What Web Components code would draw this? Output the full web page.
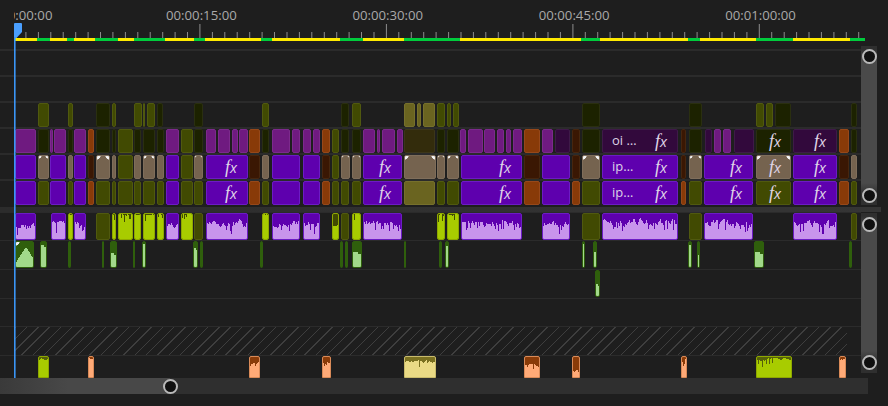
<!DOCTYPE html>
<html>
<head>
<meta charset="utf-8">
<title>Timeline</title>
<style>
  html, body { margin: 0; background: #1e1e1e; }
</style>
</head>
<body>
<nle-timeline>
  <nle-ruler slot="ruler"></nle-ruler>
  <nle-track slot="video" h="26" line="2"></nle-track>
  <nle-track slot="video" h="26" line="2"></nle-track>
  <nle-track slot="video" h="26" line="2" clips="38-49 o;68-73 o;96-110 d;112-116 o;134-142 o;143-145 o;147-155 o;157-163 d;194-203 d;262-269 o;341-349 d;352-361 o;404-415 g;417-421 g;423-435 g;437-445 o;447-451 o;453-459 o;582-600 d;689-702 d;756-764 o;766-773 o;775-791 d;851-857 d"></nle-track>
  <nle-track slot="video" h="26" line="2" clips="15-36 p;38-49 d;50-53 p;54-66 p;68-73 d;74-86 p;88-94 r;96-110 d;112-116 d;118-133 o;134-141 d;143-155 d;157-164 d;166-179 p;181-193 o;194-203 d;206-216 p;218-230 p;232-238 p;239-248 p;249-260 r;262-269 d;272-290 p;292-300 p;303-311 p;313-320 p;322-330 r;332-339 o;341-349 d;352-361 d;363-375 p;377-380 p;382-395 p;397-403 p;404-435 b;437-445 d;447-459 d;460-466 p;468-483 p;484-495 p;497-504 p;506-511 p;513-522 p;524-540 r;542-553 p;555-570 q;572-580 s;582-600 d;602-678 q fx oi_…;681-686 s;689-702 d;705-712 q;714-721 p;723-731 p;734-754 q;756-791 d fx;793-837 q fx;839-849 r;851-857 d"></nle-track>
  <nle-track slot="video" h="26" line="2" clips="15-36 v;38-49 t;50-66 v;68-73 t;74-86 v;88-94 s;96-110 t;112-116 t;118-133 o;134-141 t;143-155 t;157-164 t;166-179 v;181-193 o;194-203 t;206-248 v fx;249-260 s;262-269 t;272-300 v;303-320 v;322-330 s;332-339 o;341-350 t;352-361 t;363-402 v fx;404-436 t;437-445 t;447-459 t;461-522 v fx;524-540 s;542-570 v;572-580 s;582-600 t;602-678 v fx ip…;681-686 s;689-702 t;704-753 v fx;756-791 t fx;793-837 v fx;839-849 s;851-857 t"></nle-track>
  <nle-track slot="video" h="26" line="2" clips="15-36 v;38-49 o;50-66 v;68-73 o;74-86 v;88-94 r;96-110 o;112-116 o;118-133 o;134-141 o;143-155 o;157-164 o;166-179 v;181-193 o;194-203 o;206-248 v fx;249-260 r;262-269 o;272-300 v;303-320 v;322-330 r;332-339 o;341-349 o;352-361 o;363-402 v fx;404-435 g;437-445 o;447-459 o;461-522 v fx;524-540 r;542-570 v;572-580 r;582-600 o;602-678 v fx ip…;681-686 r;689-702 o;704-753 v fx;756-791 o fx;793-837 v fx;839-849 r;851-857 o"></nle-track>

  <nle-track slot="audio" h="28" line="1" ch="27" clips="15-36 w:.52;51-66 w:.6;68-73 l;74-86 w:.58;96-110 o;112-116 l;118-133 l;134-141 l;143-155 l;157-164 l;166-179 w:.55;181-193 l;194-203 o;206-248 w:.62;262-269 l;272-300 w:.6;303-320 w:.6;332-339 l:.55;341-349 o;352-361 l:1;363-402 w:.62;437-445 l;447-459 l;461-522 w:.62;542-570 w:.6;582-600 o;602-678 w:.66;689-702 o;704-753 w:.62;793-837 w:.6;851-857 o"></nle-track>
  <nle-track slot="audio" h="29" line="1" ch="27" clips="15-34 m;40-47 e:.85;68-71 n;102-104 n;110-117 e:.55;133-134 n;142-146 e:.9;193-198 e:.75;200-203 n;260-263 n;340-343 n;345-348 n;352-362 e:.6;404-405 n;439-442 n;445-449 e:.8;582-585 e:.9;593-597 e:.6;688-692 e:.85;697-700 e:.5;754-764 e:.6;849-852 n"></nle-track>
  <nle-track slot="audio" h="29" line="1" ch="27" clips="595-600 e:.5"></nle-track>
  <nle-track slot="audio" h="28" line="1" ch="27"></nle-track>
  <nle-track slot="audio" h="29" line="1" ch="28" hatch></nle-track>
  <nle-track slot="audio" h="23" line="1" ch="22" clips="38-49 c:.85;88-94 k:.85;249-260 k:.65;322-331 k:.72;404-436 y:.75;524-540 k:.6;572-580 k:.28;681-687 k:.82;756-792 c:.85;839-846 k:.85"></nle-track>

  <nle-hscroll slot="hscroll"></nle-hscroll>
</nle-timeline>

<script>
  // clip look by code: [background, border, wave fill]
  const KINDS = {
    o: ["#414a02", "#50590f"],
    d: ["#1c2200", "#2a2f10"],
    g: ["#6a6420", "#76702c"],
    b: ["#332c0c", "#3c361a"],
    p: ["#6f1a80", "#7c2a8c"],
    q: ["#32093c", "#3e1a48"],
    r: ["#883a08", "#96481a"],
    s: ["#3a1703", "#46260f"],
    v: ["#5e00ae", "#6c1cc4"],
    t: ["#75634f", "#7f6e5b"],
    w: ["#5e00ae", "#6c1cc4", "#c894ec"],
    l: ["#414a02", "#8fa800", "#a8cc00"],
    e: ["#2f5f0c", "#2f5f0c", "#a2d98a"],
    m: ["#2f5f0c", "#2f5f0c", "#a2d98a"],
    n: ["#2f5f0c", "#2f5f0c"],
    c: ["#55600a", "#8fa800", "#a8cc00"],
    k: ["#8a3b08", "#d98a58", "#ffaa77"],
    y: ["#7a7020", "#c9bb6c", "#eada85"],
  };
  const DEFAULT_LEVEL = { w: 0.6, l: 0.94, e: 0.55, m: 0.6, c: 0.85, k: 0.7, y: 0.75 };

  function waveSvg(kind, w, h, level, seed) {
    let r = seed * 7919 + 13;
    const rnd = () => (r = (r * 16807) % 2147483647) / 2147483647;
    let d = `M0 ${h}`;
    let walk = 0;
    for (let x = 0; x < w; x++) {
      let top;
      if (kind === "m") {
        top = h * (1 - (0.18 + 0.6 * (1 - Math.abs(x / w - 0.55) / 0.55)));
      } else if (kind === "e") {
        // green clips are a flat fill with one soft step
        top = h * (1 - level) + (x / w > 0.5 ? 2 : 0);
      } else {
        walk = walk * 0.6 + (rnd() - 0.5) * (kind === "w" ? 5 : 2);
        top = h * (1 - level) + walk;
        const n = rnd();
        if (kind === "w" && n > 0.8) top += rnd() * h * 0.34;
        else if (kind !== "w" && n > 0.8) top += rnd() * h * 0.3;
      }
      d += `V${Math.round(top)}H${x + 1}`;
    }
    d += `V${h}Z`;
    return `<svg width="${w}" height="${h}" viewBox="0 0 ${w} ${h}" shape-rendering="crispEdges"><path d="${d}" fill="${KINDS[kind][2]}"/></svg>`;
  }

  class NleClip extends HTMLElement {
    constructor() {
      super();
      this.attachShadow({ mode: "open" });
    }

    connectedCallback() {
      const kind = this.getAttribute("kind");
      const w = +this.getAttribute("w");
      const h = +this.getAttribute("h");
      const [bg, border, fill] = KINDS[kind];
      const level = +this.getAttribute("level") || DEFAULT_LEVEL[kind] || 0;
      const label = this.getAttribute("label");
      const corner = Math.min(5, Math.max(2, Math.round(w / 3)));
      const flatBottom = kind === "c" || kind === "k" || kind === "y";
      this.shadowRoot.innerHTML = `
        <style>
          :host {
            display: block;
            flex: none;
            width: ${w}px;
            height: ${h}px;
            margin-left: ${this.getAttribute("gap")}px;
          }
          .clip {
            box-sizing: border-box;
            height: 100%;
            display: flex;
            align-items: center;
            overflow: hidden;
            position: relative;
            background: ${bg};
            border: 1px solid ${border};
            border-radius: ${flatBottom ? "2px 2px 0 0" : "2px"};
            color: #ddd2e6;
            font: 13px "Open Sans", sans-serif;
          }
          svg { position: absolute; left: -1px; top: -1px; }
          .label { padding-left: 9px; white-space: pre; position: relative; top: -1px; }
          .fx {
            margin-left: auto;
            width: 34px;
            text-align: center;
            flex: none;
            font: italic 18px "Liberation Serif", serif;
            color: #e0d6e8;
            position: relative;
            left: 1px;
          }
          .fx b { font: italic 400 14.5px "Open Sans", sans-serif; }
          .cor {
            position: absolute;
            top: -1px;
            width: ${corner}px;
            height: ${corner}px;
          }
          .cor.a { left: -1px; background: radial-gradient(circle at 0 0, #f2f2f2 ${corner - 0.5}px, transparent ${corner}px); }
          .cor.b { right: -1px; background: radial-gradient(circle at 100% 0, #f2f2f2 ${corner - 0.5}px, transparent ${corner}px); }
        </style>
        <div class="clip">
          ${fill ? waveSvg(kind, w, h, level, +this.getAttribute("seed")) : ""}
          ${kind === "t" ? '<i class="cor a"></i><i class="cor b"></i>' : ""}
          ${(kind === "m" || (kind === "e" && w > 4 && level > 0.7)) ? '<i class="cor a"></i>' : ""}
          ${label ? `<span class="label">${label}</span>` : ""}
          ${this.hasAttribute("fx") ? '<span class="fx">f<b>x</b></span>' : ""}
        </div>
      `;
    }
  }

  class NleTrack extends HTMLElement {
    constructor() {
      super();
      this.attachShadow({ mode: "open" });
    }

    connectedCallback() {
      const h = +this.getAttribute("h");
      const line = +this.getAttribute("line");
      const inner = +this.getAttribute("ch") || h - line;
      let pos = 0;
      let html = "";
      for (const item of (this.getAttribute("clips") || "").split(";").filter(Boolean)) {
        const parts = item.split(" ");
        const [from, to] = parts[0].split("-").map(Number);
        const [kind, level] = parts[1].split(":");
        const fx = parts.includes("fx");
        const label = parts.find((p) => p.includes("…"));
        html += `<nle-clip kind="${kind}" w="${to - from}" h="${inner}" gap="${from - pos}" seed="${from}"
          ${level ? `level="${level}"` : ""} ${fx ? "fx" : ""} ${label ? `label="${label.replace("_", " ")}"` : ""}></nle-clip>`;
        pos = to;
      }
      const hatch = this.hasAttribute("hatch")
        ? `<div class="hatch"></div>`
        : "";
      this.shadowRoot.innerHTML = `
        <style>
          :host {
            display: flex;
            box-sizing: border-box;
            height: ${h}px;
            border-top: ${line}px solid #2b2b2b;
            overflow: hidden;
          }
          .hatch {
            margin-left: 15px;
            width: 832px;
            height: 100%;
            background: repeating-linear-gradient(135deg, #3e3e3e 0 1px, transparent 1px 8px);
          }
        </style>
        ${html}${hatch}
      `;
    }
  }

  class NleRuler extends HTMLElement {
    constructor() {
      super();
      this.attachShadow({ mode: "open" });
    }

    connectedCallback() {
      let ticks = "";
      for (let i = 1; i <= 68; i++) {
        const x = 13 + i * 12.43;
        const major = i % 15 === 0;
        ticks += `<rect x="${x.toFixed(1)}" y="${major ? 24 : 32}" width="1" height="${major ? 14 : 6}" fill="#8c8c8c"/>`;
      }
      const green = [[37, 50], [67, 74], [95, 118], [134, 165], [194, 205], [261, 272], [340, 363], [404, 460], [581, 600], [688, 700], [756, 793], [850, 865]];
      const bar = green.map(([a, b]) => `<rect x="${a}" y="38" width="${b - a}" height="3" fill="#00cc3c"/>`).join("");
      const labels = ["00:00:00:00", "00:00:15:00", "00:00:30:00", "00:00:45:00", "00:01:00:00"]
        .map((t) => `<span>${t}</span>`).join("");
      this.shadowRoot.innerHTML = `
        <style>
          :host {
            display: block;
            height: 49px;
            width: 888px;
            overflow: hidden;
          }
          .labels {
            display: flex;
            height: 24px;
            margin-left: 14px;
            overflow: hidden;
            font: 13.2px "Open Sans", sans-serif;
            color: #a9a9a9;
          }
          .labels span { flex: none; width: 186.4px; line-height: 30px; }
          .labels span:first-child { margin-left: -32.3px; width: 184.3px; }
          svg { display: block; }
        </style>
        <div class="labels">${labels}</div>
        <svg width="888" height="25" viewBox="0 24 888 25">
          ${ticks}
          <rect x="15" y="38" width="850" height="3" fill="#ffea00"/>
          ${bar}
        </svg>
      `;
    }
  }

  // round knob sitting on the ends of the scroll thumbs
  class NleKnob extends HTMLElement {
    constructor() {
      super();
      this.attachShadow({ mode: "open" });
      this.shadowRoot.innerHTML = `
        <style>
          :host {
            display: block;
            box-sizing: border-box;
            width: 15px;
            height: 15px;
            border-radius: 50%;
            background: #101010;
            border: 2.5px solid #b9b9b9;
          }
        </style>
      `;
    }
  }

  class NleVscroll extends HTMLElement {
    constructor() {
      super();
      this.attachShadow({ mode: "open" });
      this.shadowRoot.innerHTML = `
        <style>
          :host {
            display: flex;
            flex-direction: column;
            justify-content: space-between;
            box-sizing: border-box;
            width: 16px;
            background: linear-gradient(#2f2f2f 0 3px, #4a4a4a 14px calc(100% - 22px), #2f2f2f calc(100% - 10px));
          }
          nle-knob { margin-left: .5px; }
        </style>
        <nle-knob></nle-knob>
        <nle-knob></nle-knob>
      `;
    }
  }

  class NleHscroll extends HTMLElement {
    constructor() {
      super();
      this.attachShadow({ mode: "open" });
      this.shadowRoot.innerHTML = `
        <style>
          :host {
            display: block;
            width: 868px;
            height: 16px;
            background: #2f2f2f;
          }
          .thumb {
            position: relative;
            width: 170px;
            height: 100%;
            background: linear-gradient(90deg, #3a3a3a, #484848 40%);
          }
          nle-knob { position: absolute; right: -8px; top: 1px; }
        </style>
        <div class="thumb"><nle-knob></nle-knob></div>
      `;
    }
  }

  class NleTimeline extends HTMLElement {
    constructor() {
      super();
      this.attachShadow({ mode: "open" });
      this.shadowRoot.innerHTML = `
        <style>
          :host {
            display: block;
            position: relative;
            width: 888px;
            height: 406px;
            overflow: hidden;
            background: #1e1e1e;
          }
          .pane { display: flex; }
          .rows { flex: none; width: 861px; }
          .top { height: 207px; }
          .top nle-vscroll { margin-top: 46px; height: 159px; padding: 2.5px 0; }
          .band { width: 881px; height: 5px; background: linear-gradient(90deg, #2c2c2c, #353535); }
          .bottom { height: 166px; }
          .bottom nle-vscroll { margin-top: 1px; height: 160px; padding: 4px 0 3px; }
          .playhead { position: absolute; left: 14px; top: 23px; }
        </style>
        <div class="pane top">
          <div class="rows">
            <slot name="ruler"></slot>
            <slot name="video"></slot>
          </div>
          <nle-vscroll></nle-vscroll>
        </div>
        <div class="band"></div>
        <div class="pane bottom">
          <div class="rows"><slot name="audio"></slot></div>
          <nle-vscroll></nle-vscroll>
        </div>
        <slot name="hscroll"></slot>
        <svg class="playhead" width="9" height="356" viewBox="0 0 9 356">
          <path d="M0 1Q0 0 1 0H7Q8 0 8 1V9L2.5 15H0Z" fill="#4a9fff"/>
          <rect x="0" y="14" width="1.6" height="341" fill="#3b95f5"/>
        </svg>
      `;
    }
  }

  customElements.define("nle-clip", NleClip);
  customElements.define("nle-track", NleTrack);
  customElements.define("nle-ruler", NleRuler);
  customElements.define("nle-knob", NleKnob);
  customElements.define("nle-vscroll", NleVscroll);
  customElements.define("nle-hscroll", NleHscroll);
  customElements.define("nle-timeline", NleTimeline);
</script>
</body>
</html>
